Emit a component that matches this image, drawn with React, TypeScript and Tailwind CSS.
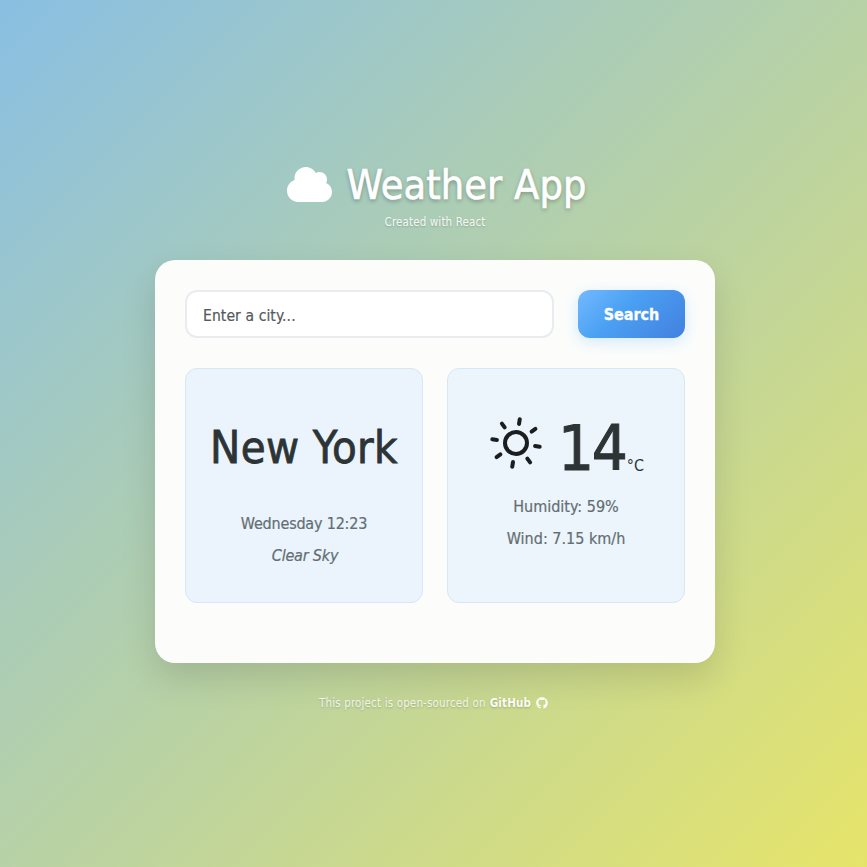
import { FaGithub } from "react-icons/fa";

const RAYS = [9, 54, 99, 144, 189, 234, 279, 324];

function CloudIcon() {
  return (
    <svg viewBox="0 32 576 448" className="mb-[2px] h-[35px] w-[45px] shrink-0" fill="white">
      <path d="M0 336c0 79.5 64.5 144 144 144l304 0c70.7 0 128-57.3 128-128 0-51.6-30.5-96.1-74.5-116.3 6.7-13.1 10.5-28 10.5-43.7 0-53-43-96-96-96-17.7 0-34.2 4.8-48.4 13.1-24.1-45.8-72.2-77.1-127.6-77.1-79.5 0-144 64.5-144 144 0 8 .7 15.9 1.9 23.5-56.9 19.2-97.9 73.1-97.9 136.5z" />
    </svg>
  );
}

function SunIcon() {
  return (
    <svg viewBox="-28 -28 56 56" className="h-14 w-14 shrink-0" fill="none" stroke="#1b1e20" strokeWidth="4" strokeLinecap="round">
      <circle r="11" />
      {RAYS.map((a) => (
        <line key={a} x1="0" y1="-19.3" x2="0" y2="-24" transform={`rotate(${a})`} />
      ))}
    </svg>
  );
}

export default function App() {
  return (
    <div className="flex h-[867px] w-full flex-col items-center bg-[linear-gradient(135deg,#89bfe3_0%,#e6e46a_100%)] pl-[3px] font-['DejaVu_Sans_Condensed','DejaVu_Sans',sans-serif] [font-stretch:condensed]">
      <header className="flex flex-col items-center pt-[160px] text-white">
        <h1 className="flex h-[50px] items-center gap-[15px] whitespace-nowrap pl-[3px] text-[41px] leading-[50px] tracking-[0.1px] [-webkit-text-stroke:0.6px_white] [text-shadow:0_2px_4px_rgba(0,0,0,0.3)]">
          <CloudIcon />
          <span>Weather App</span>
        </h1>
        <p className="mt-[3px] text-[11.5px] leading-[18px] tracking-[0.13px] text-white/90 [text-shadow:0_1px_2px_rgba(0,0,0,0.2)]">Created with React</p>
      </header>

      <main className="mt-[29px] h-[403px] w-[560px] rounded-[20px] bg-[#fcfdfb] p-[30px] shadow-[0_15px_35px_rgba(0,0,0,0.13)]">
        <form className="flex h-12 gap-6" onSubmit={(e) => e.preventDefault()}>
          <input
            aria-label="City"
            placeholder="Enter a city..."
            className="h-12 w-[369px] rounded-xl border-2 border-[#e9ecef] bg-white px-4 pt-[3px] text-[15.5px] tracking-[0.1px] [-webkit-text-stroke:0.2px_#55595c] placeholder:text-[#55595c]"
          />
          <button className="h-12 w-[107px] rounded-xl bg-[linear-gradient(135deg,#74b9ff_0%,#4ba1f3_40%,#4280df_100%)] pt-[2px] text-[16px] font-bold text-white shadow-[0_4px_15px_rgba(116,185,255,0.3)] [-webkit-text-stroke:0.3px_white]">
            Search
          </button>
        </form>

        <div className="mt-[30px] grid grid-cols-2 gap-6">
          <section className="flex h-[235px] flex-col items-center rounded-xl border border-[#d6e8f5] bg-[#ebf4fc] text-[#636e72]">
            <h2 className="mt-[49px] whitespace-nowrap text-[45px] leading-[60px] tracking-[0.4px] text-[#2d3436] [-webkit-text-stroke:0.8px_#2d3436]">New York</h2>
            <p className="mt-[30px] text-[16px] leading-8 tracking-[-0.2px] [-webkit-text-stroke:0.2px_#636e72]">Wednesday 12:23</p>
            <p className="pl-[2px] text-[16px] italic leading-8 tracking-[-0.2px] [-webkit-text-stroke:0.2px_#636e72]">Clear Sky</p>
          </section>
          <section className="flex h-[235px] flex-col items-center rounded-xl border border-[#d6e8f5] bg-[#ecf5fb] text-[#636e72]">
            <div className="mt-[46px] flex h-[76px] text-[#2d3436]">
              <SunIcon />
              <span className="ml-[14px] text-[63px] leading-[67px] tracking-[-2.2px] [-webkit-text-stroke:1px_#2d3436]">14</span>
              <span className="ml-[1px] mt-[39px] text-[16px] leading-6">°C</span>
            </div>
            <p className="text-[16px] leading-8 [-webkit-text-stroke:0.2px_#636e72]">Humidity: 59%</p>
            <p className="text-[16px] leading-8 [-webkit-text-stroke:0.2px_#636e72]">Wind: 7.15 km/h</p>
          </section>
        </div>
      </main>

      <footer className="mt-[31px] flex items-center whitespace-nowrap pr-[3px] text-[11.5px] leading-[18px] text-white/80 [text-shadow:0_1px_2px_rgba(0,0,0,0.2)]">
        <span className="tracking-[0.16px]">This project is open-sourced on</span>
        <a className="ml-1 flex items-center gap-[5px] font-bold tracking-[0.15px] text-white/95">
          <span>GitHub</span>
          <FaGithub className="h-3 w-3" />
        </a>
      </footer>
    </div>
  );
}
